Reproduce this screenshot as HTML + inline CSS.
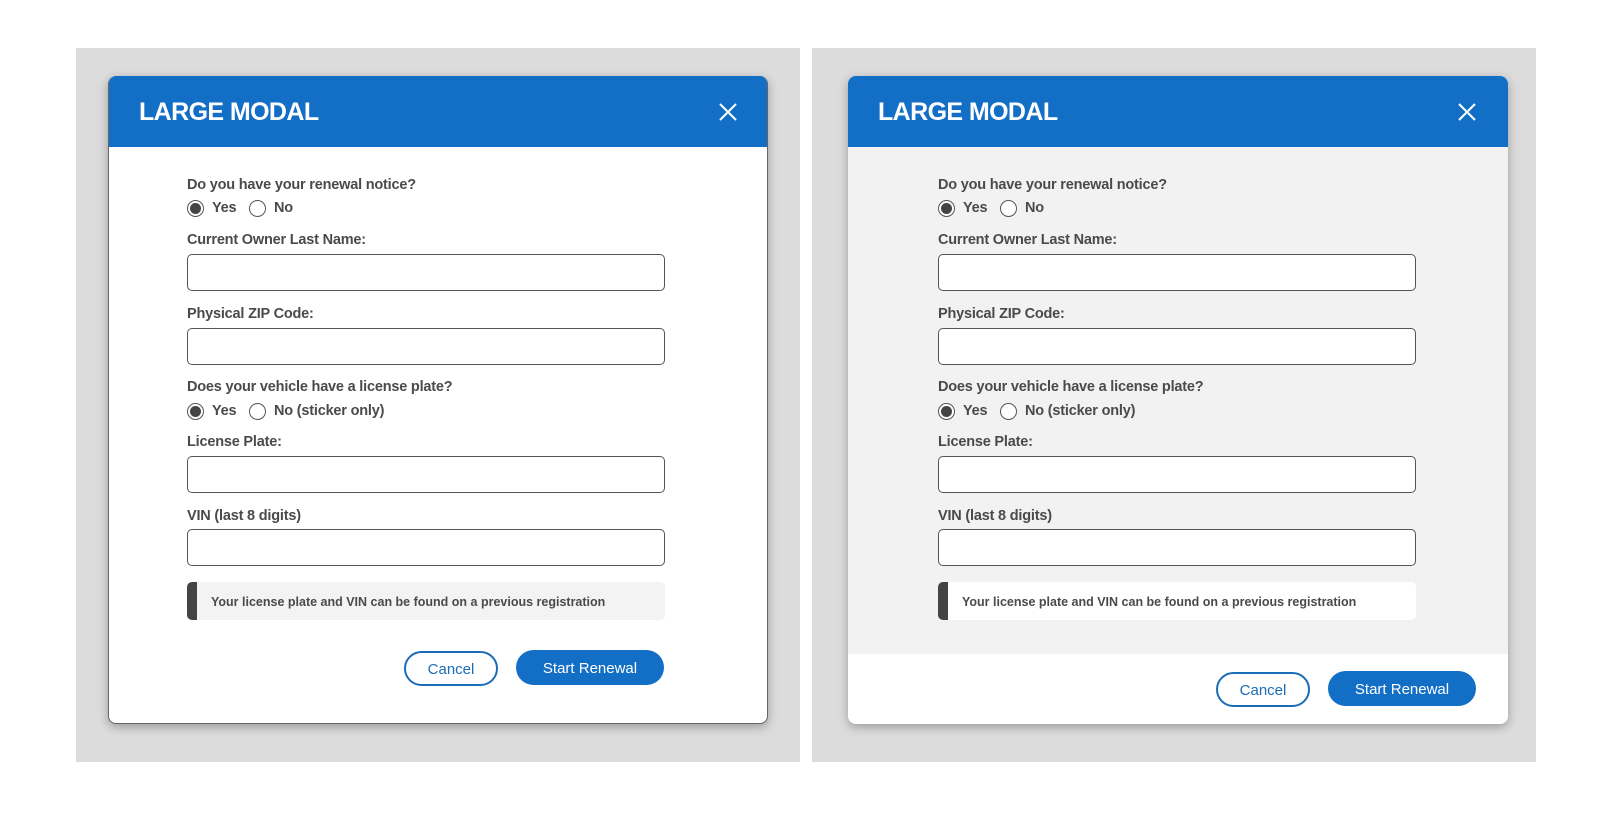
<!DOCTYPE html>
<html><head><meta charset="utf-8"><style>
*{box-sizing:border-box;margin:0;padding:0}
body{width:1613px;height:828px;background:#fff;position:relative;font-family:"Liberation Sans",sans-serif;color:#444;overflow:hidden}
.gray{position:absolute;top:48px;width:724px;height:714px;background:#dcdcdc}
.modal{position:absolute;top:76px;width:660px;height:648px;border-radius:8px;background:#fff;box-shadow:0 3px 10px rgba(0,0,0,.3);overflow:hidden}
.m1{border:1px solid #666;border-top:none}
.hdr{position:absolute;left:0;top:0;right:0;height:71px;background:#136fc6}
.hdr h1{position:absolute;left:30px;top:22px;color:#fff;font-size:25px;font-weight:bold;letter-spacing:-0.6px}
.x{position:absolute;top:27px;width:18px;height:18px}
.a{position:absolute;font-size:14.5px;font-weight:bold;color:#4a4a4a;letter-spacing:-0.2px;white-space:nowrap}
.inp{position:absolute;width:478px;height:37px;border:1px solid #555;border-radius:5px;background:#fff}
.r{position:absolute;width:17px;height:17px;border:1px solid #555;border-radius:50%;background:#fff}
.r.on::after{content:"";position:absolute;left:2px;top:2px;width:11px;height:11px;border-radius:50%;background:#444}
.hint{position:absolute;width:478px;height:38px;border-radius:5px;border-left:10px solid #444;font-size:12.5px;font-weight:bold;color:#4a4a4a;padding:13px 0 0 14px}
.btn{position:absolute;height:35px;border-radius:18px;font-size:15px;text-align:center;line-height:35px}
.cancel{width:94px;border:2px solid #1a6cb8;color:#1a6cb8;background:#fff;line-height:33px}
.start{width:148px;background:#136fc6;color:#fff;line-height:37px}
</style></head><body>
<div class="gray" style="left:76px"></div>
<div class="gray" style="left:812px"></div>

<div class="modal m1" style="left:108px">
 <div class="hdr"><h1>LARGE MODAL</h1>
  <svg class="x" style="left:610px" viewBox="0 0 18 18"><path d="M1 1L17 17M17 1L1 17" stroke="#fff" stroke-width="2"/></svg></div>
</div>
<div class="modal" style="left:848px;background:#f2f2f2">
 <div class="hdr"><h1>LARGE MODAL</h1>
  <svg class="x" style="left:610px" viewBox="0 0 18 18"><path d="M1 1L17 17M17 1L1 17" stroke="#fff" stroke-width="2"/></svg></div>
 <div style="position:absolute;left:0;right:0;top:578px;bottom:0;background:#fff"></div>
</div>

<div style="position:absolute;left:187px;top:0">
 <div class="a" style="left:0;top:177px">Do you have your renewal notice?</div>
 <div class="r on" style="left:0;top:200px"></div><div class="a" style="left:25px;top:200px">Yes</div>
 <div class="r" style="left:62px;top:200px"></div><div class="a" style="left:87px;top:200px">No</div>
 <div class="a" style="left:0;top:232px">Current Owner Last Name:</div>
 <div class="inp" style="left:0;top:254px"></div>
 <div class="a" style="left:0;top:306px">Physical ZIP Code:</div>
 <div class="inp" style="left:0;top:328px"></div>
 <div class="a" style="left:0;top:379px">Does your vehicle have a license plate?</div>
 <div class="r on" style="left:0;top:403px"></div><div class="a" style="left:25px;top:403px">Yes</div>
 <div class="r" style="left:62px;top:403px"></div><div class="a" style="left:87px;top:403px">No (sticker only)</div>
 <div class="a" style="left:0;top:434px">License Plate:</div>
 <div class="inp" style="left:0;top:456px"></div>
 <div class="a" style="left:0;top:508px">VIN (last 8 digits)</div>
 <div class="inp" style="left:0;top:529px"></div>
 <div class="hint" style="left:0;top:582px;background:#f3f3f3">Your license plate and VIN can be found on a previous registration</div>
</div>
<div class="btn cancel" style="left:404px;top:651px">Cancel</div>
<div class="btn start" style="left:516px;top:650px">Start Renewal</div>

<div style="position:absolute;left:938px;top:0">
 <div class="a" style="left:0;top:177px">Do you have your renewal notice?</div>
 <div class="r on" style="left:0;top:200px"></div><div class="a" style="left:25px;top:200px">Yes</div>
 <div class="r" style="left:62px;top:200px"></div><div class="a" style="left:87px;top:200px">No</div>
 <div class="a" style="left:0;top:232px">Current Owner Last Name:</div>
 <div class="inp" style="left:0;top:254px"></div>
 <div class="a" style="left:0;top:306px">Physical ZIP Code:</div>
 <div class="inp" style="left:0;top:328px"></div>
 <div class="a" style="left:0;top:379px">Does your vehicle have a license plate?</div>
 <div class="r on" style="left:0;top:403px"></div><div class="a" style="left:25px;top:403px">Yes</div>
 <div class="r" style="left:62px;top:403px"></div><div class="a" style="left:87px;top:403px">No (sticker only)</div>
 <div class="a" style="left:0;top:434px">License Plate:</div>
 <div class="inp" style="left:0;top:456px"></div>
 <div class="a" style="left:0;top:508px">VIN (last 8 digits)</div>
 <div class="inp" style="left:0;top:529px"></div>
 <div class="hint" style="left:0;top:582px;background:#fff">Your license plate and VIN can be found on a previous registration</div>
</div>
<div class="btn cancel" style="left:1216px;top:672px">Cancel</div>
<div class="btn start" style="left:1328px;top:671px">Start Renewal</div>
</body></html>
